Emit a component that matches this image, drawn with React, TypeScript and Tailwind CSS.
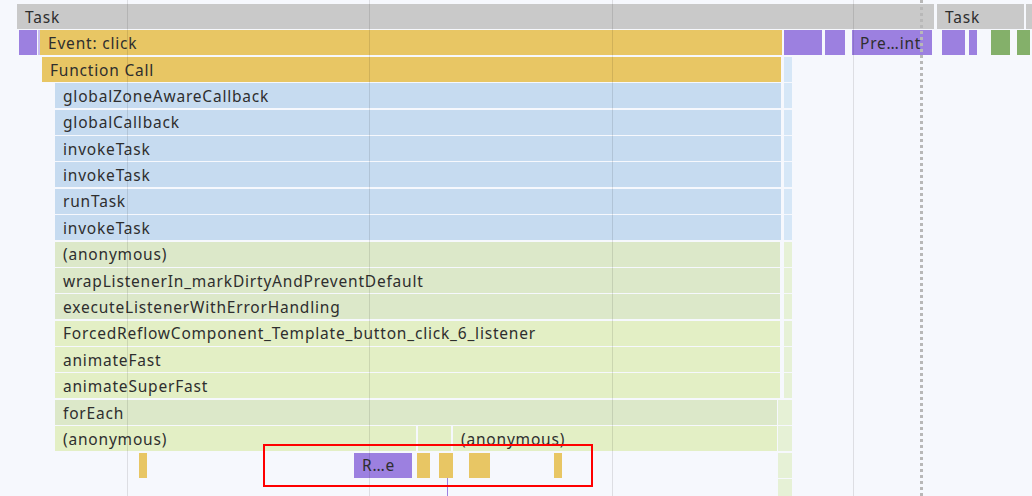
import React from 'react';

type Bar = { x: number; w: number; c: string; label?: string };

const GRAY = 'bg-[#c9c9c9]';
const YEL = 'bg-[#e8c664]';
const PUR = 'bg-[#9c80e0]';
const BLUE = 'bg-[#c6dbf0]';
const GRN = 'bg-[#dce8c9]';
const LIME = 'bg-[#e3efc5]';
const SKY = 'bg-[#d6e7f7]';
const PGRN = 'bg-[#e6f1d6]';
const LGRN = 'bg-[#84b06a]';

const blueRow = (label: string): Bar[] => [
    { x: 55, w: 726, c: BLUE, label },
    { x: 784, w: 5, c: SKY },
];

const greenRow = (label: string, c: string, end = 780): Bar[] => [
    { x: 55, w: end - 55, c, label },
    ...(end < 780 ? [{ x: 778, w: 2, c: PGRN }] : []),
    { x: 784, w: 5, c: PGRN },
];

const rows: Bar[][] = [
    [
        { x: 17, w: 917, c: GRAY, label: 'Task' },
        { x: 937, w: 87, c: GRAY, label: 'Task' },
        { x: 1026, w: 3, c: GRAY },
    ],
    [
        { x: 19, w: 18, c: PUR },
        { x: 38, w: 1, c: 'bg-[#c9bdf0]' },
        { x: 40, w: 742, c: YEL, label: 'Event: click' },
        { x: 784, w: 38, c: PUR },
        { x: 825, w: 20, c: PUR },
        { x: 852, w: 80, c: PUR, label: 'Pre…int' },
        { x: 942, w: 23, c: PUR },
        { x: 969, w: 1, c: PUR },
        { x: 991, w: 19, c: LGRN },
        { x: 1017, w: 1, c: LGRN },
        { x: 1022, w: 2, c: LGRN },
    ],
    [
        { x: 42, w: 739, c: YEL, label: 'Function Call' },
        { x: 784, w: 5, c: SKY },
    ],
    blueRow('globalZoneAwareCallback'),
    blueRow('globalCallback'),
    blueRow('invokeTask'),
    blueRow('invokeTask'),
    blueRow('runTask'),
    blueRow('invokeTask'),
    greenRow('(anonymous)', GRN),
    greenRow('wrapListenerIn_markDirtyAndPreventDefault', GRN),
    greenRow('executeListenerWithErrorHandling', GRN),
    greenRow('ForcedReflowComponent_Template_button_click_6_listener', LIME),
    greenRow('animateFast', LIME),
    greenRow('animateSuperFast', LIME),
    greenRow('forEach', GRN, 777),
    [
        { x: 55, w: 361, c: LIME, label: '(anonymous)' },
        { x: 418, w: 33, c: LIME },
        { x: 453, w: 324, c: LIME, label: '(anonymous)' },
        { x: 778, w: 2, c: PGRN },
        { x: 784, w: 5, c: PGRN },
    ],
    [
        { x: 139, w: 7, c: YEL },
        { x: 354, w: 58, c: PUR, label: 'R…e' },
        { x: 417, w: 13, c: YEL },
        { x: 439, w: 14, c: YEL },
        { x: 469, w: 21, c: YEL },
        { x: 554, w: 7, c: YEL },
        { x: 778, w: 2, c: PGRN },
        { x: 784, w: 5, c: PGRN },
    ],
    [
        { x: 778, w: 2, c: PGRN },
        { x: 784, w: 5, c: PGRN },
    ],
];

const gridLines = [127, 369, 612, 853];

const App: React.FC = () => {
    return (
        <div
            className="relative w-[1032px] h-[496px] overflow-hidden bg-[#f6f8fd] text-[#2e2e2e] text-[15.5px] tracking-[0.8px]"
            style={{ fontFamily: '"Noto Sans", "Open Sans", sans-serif' }}
        >
            <div className="flex flex-col pt-[4px]">
                {rows.map((row, i) => (
                    <div key={i} className="relative h-[26.4px] shrink-0">
                        {row.map((b, j) => (
                            <div
                                key={j}
                                className={`absolute top-0 h-[25px] flex items-center overflow-hidden whitespace-nowrap pl-[8px] pt-[2px] leading-none ${b.c}`}
                                style={{ left: b.x, width: b.w }}
                            >
                                {b.label}
                            </div>
                        ))}
                    </div>
                ))}
            </div>

            {gridLines.map((x) => (
                <div key={x} className="absolute top-0 bottom-0 w-[1px] bg-black/10" style={{ left: x }} />
            ))}

            {/* cursor line */}
            <div className="absolute top-0 bottom-0 left-[920px] w-[3px] border-l-[3px] border-dotted border-[#b8b8b8]" />

            {/* flow arrow line */}
            <div className="absolute left-[447px] top-[478px] bottom-0 w-[1px] bg-[#9c80e0]" />

            {/* highlight box */}
            <div className="absolute left-[263px] top-[444px] w-[330px] h-[43px] border-2 border-[#ff0000]" />
        </div>
    );
};

export default App;
